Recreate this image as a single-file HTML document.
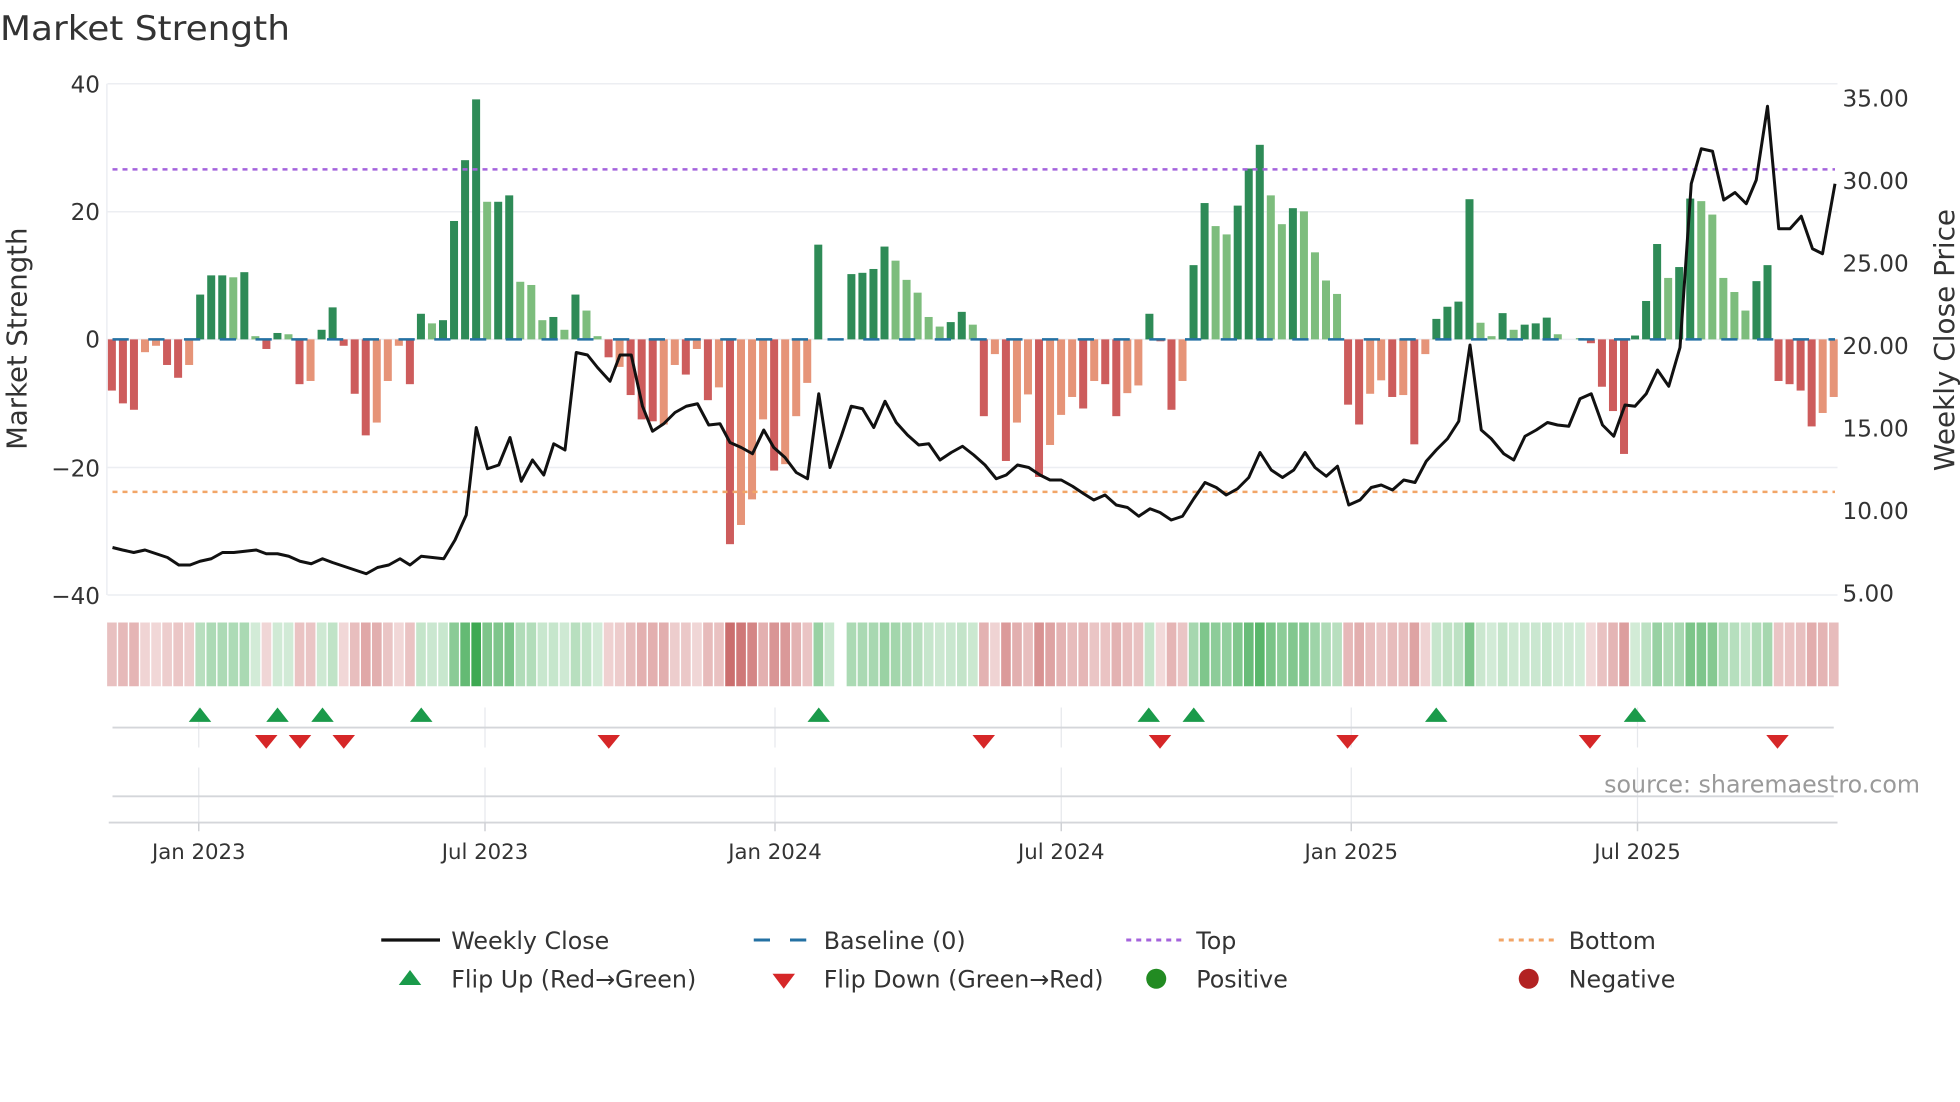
<!DOCTYPE html>
<html><head><meta charset="utf-8"><style>
html,body{margin:0;padding:0;background:#fff;width:1960px;height:1102px;overflow:hidden}
svg{display:block}
text{font-family:"DejaVu Sans","Liberation Sans",sans-serif;fill:#333}
</style></head><body>
<svg id="s" width="1960" height="1102" viewBox="0 0 1568 881.6" xmlns="http://www.w3.org/2000/svg">
<rect width="1568" height="882" fill="#fff"/>
<text x="0" y="32" font-size="27" textLength="232" lengthAdjust="spacingAndGlyphs">Market Strength</text>
<g stroke="#eceef2" stroke-width="1.2">
<line x1="86" y1="67" x2="1470" y2="67"/><line x1="86" y1="169.4" x2="1470" y2="169.4"/>
<line x1="86" y1="374" x2="1470" y2="374"/><line x1="86" y1="476" x2="1470" y2="476"/>
<line x1="86" y1="271.5" x2="1470" y2="271.5"/>
<line x1="85.5" y1="67" x2="85.5" y2="476"/>
</g>
<g font-size="18.5" text-anchor="end">
<text x="80" y="74">40</text><text x="80" y="176">20</text><text x="80" y="278">0</text>
<text x="80" y="381">−20</text><text x="80" y="483">−40</text>
</g>
<g font-size="18.5">
<text x="1474" y="85">35.00</text><text x="1474" y="151">30.00</text><text x="1474" y="217">25.00</text>
<text x="1474" y="283">20.00</text><text x="1474" y="349">15.00</text><text x="1474" y="415">10.00</text><text x="1474" y="481">5.00</text>
</g>
<text transform="translate(21,271) rotate(-90)" font-size="22" text-anchor="middle">Market Strength</text>
<text transform="translate(1563,272) rotate(-90)" font-size="22.3" text-anchor="middle">Weekly Close Price</text>
<g id="bars"></g>
<line x1="90" y1="271.5" x2="1468" y2="271.5" stroke="#2471a3" stroke-width="2" stroke-dasharray="13 15.6"/>
<line x1="90" y1="135.5" x2="1468" y2="135.5" stroke="#a463dc" stroke-width="2" stroke-dasharray="4 4"/>
<line x1="90" y1="393.5" x2="1468" y2="393.5" stroke="#f2a567" stroke-width="2" stroke-dasharray="4 4"/>
<polyline id="price" fill="none" stroke="#111" stroke-width="2.4" stroke-linejoin="round"/>
<g id="heat"></g>
<g stroke="#e6e8ec" stroke-width="1">
<line x1="159" y1="566" x2="159" y2="598"/><line x1="388" y1="566" x2="388" y2="598"/><line x1="620" y1="566" x2="620" y2="598"/>
<line x1="849" y1="566" x2="849" y2="598"/><line x1="1081" y1="566" x2="1081" y2="598"/><line x1="1310" y1="566" x2="1310" y2="598"/>
<line x1="159" y1="614" x2="159" y2="658"/><line x1="388" y1="614" x2="388" y2="658"/><line x1="620" y1="614" x2="620" y2="658"/>
<line x1="849" y1="614" x2="849" y2="658"/><line x1="1081" y1="614" x2="1081" y2="658"/><line x1="1310" y1="614" x2="1310" y2="658"/>
</g>
<g stroke="#d4d6da" stroke-width="1.5">
<line x1="90" y1="582" x2="1467" y2="582"/><line x1="90" y1="637" x2="1467" y2="637"/><line x1="87" y1="658" x2="1470" y2="658"/>
</g>
<g stroke="#cfd1d5" stroke-width="1.2">
<line x1="159" y1="658" x2="159" y2="665"/><line x1="388" y1="658" x2="388" y2="665"/><line x1="620" y1="658" x2="620" y2="665"/>
<line x1="849" y1="658" x2="849" y2="665"/><line x1="1081" y1="658" x2="1081" y2="665"/><line x1="1310" y1="658" x2="1310" y2="665"/>
</g>
<g id="flips"></g>
<text x="1536" y="634" font-size="19" text-anchor="end" style="fill:#9a9a9a">source: sharemaestro.com</text>
<g font-size="17" text-anchor="middle">
<text x="159" y="687">Jan 2023</text><text x="388" y="687">Jul 2023</text><text x="620" y="687">Jan 2024</text>
<text x="849" y="687">Jul 2024</text><text x="1081" y="687">Jan 2025</text><text x="1310" y="687">Jul 2025</text>
</g>
<g font-size="19">
<line x1="305" y1="752" x2="352" y2="752" stroke="#111" stroke-width="2.6"/>
<text x="361" y="759">Weekly Close</text>
<line x1="603" y1="752" x2="647" y2="752" stroke="#2471a3" stroke-width="2.4" stroke-dasharray="13 16"/>
<text x="659" y="759">Baseline (0)</text>
<line x1="901" y1="752" x2="945" y2="752" stroke="#a463dc" stroke-width="2.4" stroke-dasharray="4 4"/>
<text x="957" y="759">Top</text>
<line x1="1199" y1="752" x2="1243" y2="752" stroke="#f2a567" stroke-width="2.4" stroke-dasharray="4 4"/>
<text x="1255" y="759">Bottom</text>
<polygon points="319,788 337,788 328,776" fill="#1a9a4a"/>
<text x="361" y="790">Flip Up (Red→Green)</text>
<polygon points="618,779 636,779 627,791" fill="#d62728"/>
<text x="659" y="790">Flip Down (Green→Red)</text>
<circle cx="925" cy="783" r="8" fill="#228b22"/>
<text x="957" y="790">Positive</text>
<circle cx="1223" cy="783" r="8" fill="#b22222"/>
<text x="1255" y="790">Negative</text>
</g>
</svg>
<script>
var NS="http://www.w3.org/2000/svg";
var V=[-8,-10,-11,-2,-1,-4,-6,-4,7,10,10,9.7,10.5,0.5,-1.5,1,0.8,-7,-6.5,1.5,5,-1,-8.5,-15,-13,-6.5,-1,-7,4,2.5,3,18.5,28,37.5,21.5,21.5,22.5,9,8.5,3,3.5,1.5,7,4.5,0.5,
-2.8,-4.3,-8.7,-12.5,-12.8,-13.3,-4,-5.5,-1.5,-9.5,-7.5,-32,-29,-25,-12.5,-20.5,-19.5,-12,-6.8,14.8,0,0,10.2,10.4,11,14.5,12.3,9.3,7.3,3.5,2,2.7,4.3,2.3,
-12,-2.3,-19,-13,-8.6,-21.5,-16.5,-11.8,-9,-10.8,-6.5,-7,-12,-8.4,-7.2,4,-0.3,-11,-6.5,
11.6,21.3,17.7,16.4,20.9,26.7,30.4,22.5,18,20.5,20,13.6,9.2,7.1,-10.2,-13.3,-8.5,-6.4,-9,-8.7,-16.4,-2.3,3.2,5.1,5.9,21.9,2.6,0.5,4.1,1.5,2.3,2.5,3.4,0.8,0,0.2,-0.6,-7.4,-11.2,-17.9,0.6,6,14.9,9.6,11.3,22,21.6,19.5,9.6,7.4,4.5,9.1,11.6,-6.5,-7,-8,-13.6,-11.5,-9];
var HV={65:3,132:1};
var LIGHT={3:1,4:1,7:1,11:1,13:1,16:1,18:1,24:1,25:1,26:1,29:1,34:1,37:1,38:1,39:1,41:1,43:1,44:1,46:1,50:1,51:1,53:1,55:1,57:1,58:1,59:1,61:1,62:1,63:1,71:1,72:1,73:1,74:1,75:1,78:1,80:1,82:1,83:1,85:1,86:1,87:1,89:1,92:1,93:1,97:1,100:1,101:1,105:1,106:1,108:1,109:1,110:1,111:1,114:1,115:1,117:1,119:1,124:1,125:1,127:1,131:1,133:1,141:1,144:1,145:1,146:1,147:1,148:1,155:1,156:1};
var x0=89.5,st=8.83,bars=document.getElementById('bars'),heat=document.getElementById('heat');
function el(t,a,p){var e=document.createElementNS(NS,t);for(var k in a)e.setAttribute(k,a[k]);p.appendChild(e);return e;}
for(var i=0;i<V.length;i++){
 var v=V[i],x=x0+i*st,h=Math.abs(v)*5.12,y=v>=0?271.5-h:271.5;
 var c=v>=0?(LIGHT[i]?'#7dbd7d':'#2e8b57'):(LIGHT[i]?'#e69478':'#cd5c5c');
 if(h>0.3)el('rect',{x:x-3.2,y:y,width:6.4,height:h,fill:c},bars);
 var hv=(HV[i]!==undefined)?HV[i]:v;
 if(hv!==0){
  var a=Math.min(0.22+0.78*Math.abs(hv)/38,1);
  var base=hv>0?[60,168,80]:[196,90,90];
  var r=Math.round(255+(base[0]-255)*a),g=Math.round(255+(base[1]-255)*a),b=Math.round(255+(base[2]-255)*a);
  el('rect',{x:x-3.8,y:498,width:7.7,height:51,fill:'rgb('+r+','+g+','+b+')'},heat);
 }
}
var P=[[90,438],[98,440],[107,442],[116,440],[125,443],[134,446],[143,452],[152,452],[160,449],[169,447],[178,442],[187,442],[196,441],[205,440],[213,443],[222,443],[231,445],[240,449],[249,451],[258,447],[266,450],[275,453],[284,456],[293,459],[302,454],[311,452],[320,447],[328,452],[337,445],[346,446],[355,447],[364,432],[373,412],[381,342],[390,375],[399,372],[408,350],[417,385],[426,368],[435,380],[443,355],[452,360],[461,282],[470,284],
[478,294],[488,305],[496,284],[505,284],[514,325],[522,345],[531,339],[540,330],[549,325],[558,323],[567,340],[576,339],[584,354],[593,358],[602,363],[611,344],[619,358],[628,366],[637,378],[646,383],[655,315],[664,374],[673,349],[681,325],[690,327],[699,342],[708,321],[717,338],[726,348],[735,356],[743,355],[752,368],[761,362],[770,357],[779,364],[788,372],[797,383],[805,380],[814,372],[823,374],[832,380],[840,384],[849,384],[858,389],[867,395],[875,400],[884,396],[893,404],[902,406],[911,413],[920,407],[928,410],[937,416],[946,413],[955,399],[964,386],[973,390],[981,396],[990,391],[999,382],
[1008,362],[1017,376],[1026,382],[1035,376],[1044,362],[1052,374],[1061,381],[1070,373],[1079,404],[1088,400],[1097,390],[1105,388],[1114,392],[1123,384],[1132,386],[1141,369],[1149,360],[1158,351],[1167,337],[1176,276],[1185,344],[1193,351],[1203,363],[1211,368],[1220,349],[1229,344],[1238,338],[1246,340],[1255,341],[1264,319],[1273,315],[1282,340],[1291,349],[1300,324],[1308,325],[1317,315],[1326,296],[1335,309],[1344,278],[1353,147],[1361,119],[1370,121],[1379,160],[1388,154],[1397,163],[1405,144],[1414,85],[1423,183],[1432,183],[1441,173],[1450,199],[1458,203],[1468,147]];
document.getElementById('price').setAttribute('points',P.map(function(p){return p.join(',')}).join(' '));
var fl=document.getElementById('flips');
[160,222,258,337,655,919,955,1149,1308].forEach(function(x){el('polygon',{points:(x-9)+',577.5 '+(x+9)+',577.5 '+x+',566',fill:'#1a9a4a'},fl);});
[213,240,275,487,787,928,1078,1272,1422].forEach(function(x){el('polygon',{points:(x-9)+',588 '+(x+9)+',588 '+x+',599',fill:'#d62728'},fl);});
</script>
</body></html>
